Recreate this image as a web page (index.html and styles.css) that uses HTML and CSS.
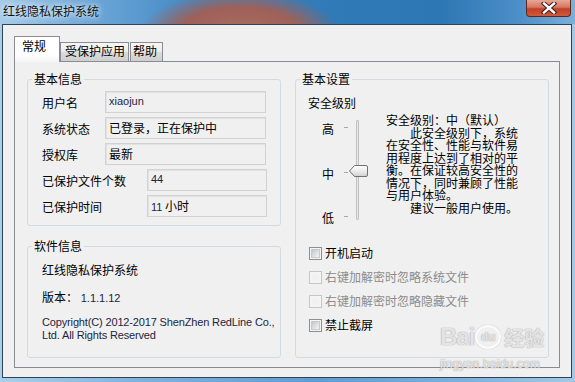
FILE: index.html
```html
<!DOCTYPE html>
<html lang="zh-CN">
<head>
  <meta charset="UTF-8" />
  <title>红线隐私保护系统</title>
  <link rel="stylesheet" href="styles.css">
</head>
<body>
  <div class="window">
    <div class="titlebar">
      <span class="title">红线隐私保护系统</span>
      <span class="close">
        <svg width="16" height="12" viewBox="0 0 16 12">
          <path d="M3 1.5 L13 10.5 M13 1.5 L3 10.5" stroke="#3a1d18" stroke-width="4.4" stroke-linecap="square"/>
          <path d="M3 1.5 L13 10.5 M13 1.5 L3 10.5" stroke="#fff" stroke-width="2.4" stroke-linecap="square"/>
        </svg>
      </span>
    </div>

    <div class="client">
      <div class="tabs">
        <div class="tab active">常规</div>
        <div class="tab">受保护应用</div>
        <div class="tab last">帮助</div>
      </div>

      <div class="panel">
        <div class="col">
          <fieldset class="group info">
            <legend>基本信息</legend>
            <div class="rows">
              <div class="row"><span class="label">用户名</span><span class="field latin">xiaojun</span></div>
              <div class="row"><span class="label">系统状态</span><span class="field">已登录，正在保护中</span></div>
              <div class="row"><span class="label">授权库</span><span class="field">最新</span></div>
              <div class="row wide"><span class="label">已保护文件个数</span><span class="field latin">44</span></div>
              <div class="row wide"><span class="label">已保护时间</span><span class="field"><span class="latin">11</span> 小时</span></div>
            </div>
          </fieldset>

          <fieldset class="group about">
            <legend>软件信息</legend>
            <div class="app-name">红线隐私保护系统</div>
            <div class="version">版本： <span class="latin">1.1.1.12</span></div>
            <div class="copyright latin">Copyright(C) 2012-2017 ShenZhen RedLine Co.,<br>Ltd. All Rights Reserved</div>
          </fieldset>
        </div>

        <fieldset class="group settings">
          <legend>基本设置</legend>
          <div class="level-title">安全级别</div>
          <div class="level">
            <div class="slider">
              <div class="marks">
                <div class="mark">高<i></i></div>
                <div class="mark">中<i></i></div>
                <div class="mark">低<i></i></div>
              </div>
              <div class="track">
                <svg class="thumb" width="19" height="12" viewBox="0 0 19 12">
                  <defs>
                    <linearGradient id="tg" x1="0" y1="0" x2="0" y2="1">
                      <stop offset="0" stop-color="#ffffff"/>
                      <stop offset="0.5" stop-color="#ececec"/>
                      <stop offset="1" stop-color="#cfcfcf"/>
                    </linearGradient>
                  </defs>
                  <path d="M0.5 6 L5.5 0.5 H17 Q18.5 0.5 18.5 2 V10 Q18.5 11.5 17 11.5 H5.5 Z" fill="url(#tg)" stroke="#707070"/>
                </svg>
              </div>
            </div>
            <div class="desc">
              <div>安全级别：中（默认）</div>
              <div>　　此安全级别下，系统</div>
              <div>在安全性、性能与软件易</div>
              <div>用程度上达到了相对的平</div>
              <div>衡。在保证较高安全性的</div>
              <div>情况下，同时兼顾了性能</div>
              <div>与用户体验。</div>
              <div>　　建议一般用户使用。</div>
            </div>
          </div>

          <div class="checks">
            <div class="check"><span class="cb"></span>开机启动</div>
            <div class="check disabled"><span class="cb"></span>右键加解密时忽略系统文件</div>
            <div class="check disabled"><span class="cb"></span>右键加解密时忽略隐藏文件</div>
            <div class="check"><span class="cb"></span>禁止截屏</div>
          </div>
        </fieldset>
      </div>
    </div>

    <div class="watermark">
      <div class="wm-logo">
        <span class="wm-bai">Bai</span>
        <span class="wm-du">du</span>
        <span class="wm-cn">经验</span>
      </div>
      <div class="wm-url">jingyan.baidu.com</div>
    </div>
  </div>
</body>
</html>
```

FILE: styles.css
```css
html, body { margin: 0; padding: 0; }
body {
  font-family: "Liberation Sans", "Noto Sans CJK SC", sans-serif;
  font-size: 12px;
  color: #000;
}
.latin { font-family: "Liberation Sans", sans-serif; font-size: 11px; color: #1c1f3e; }

.window {
  position: relative;
  width: 575px; height: 382px;
  display: flex; flex-direction: column;
  overflow: hidden;
  background: linear-gradient(90deg, #a9cfe9 0, #7fb1dc 25%, #5f9dd2 55%, #7cb0da 80%, #a3c9e6 100%);
}

/* title bar */
.titlebar {
  height: 24px; flex: none;
  display: flex; justify-content: space-between; align-items: flex-start;
  padding: 0 4px 0 3px;
  background:
    radial-gradient(ellipse 100px 44px at 240px 34px, #a86f65 0%, #9f6058 60%, rgba(160,96,88,0) 100%),
    linear-gradient(90deg, #a6cbe8 0, #6ea7d7 90px, #3f88c4 200px, #2f7ab7 330px, #2c77b4 440px, #4d8fc8 520px, #7cb0da 575px);
}
.title {
  font-family: "Noto Sans CJK SC", sans-serif;
  font-size: 12px; line-height: 14px;
  padding-top: 4px;
  color: #111;
  text-shadow: 0 0 5px rgba(255,255,255,.9), 0 0 8px rgba(255,255,255,.7);
}
.close {
  width: 45px; height: 17px;
  box-sizing: border-box;
  display: flex; align-items: center; justify-content: center;
  border: 1px solid #5a2a22; border-top: none;
  border-radius: 0 0 4px 4px;
  background: linear-gradient(#e8a696 0, #d47862 45%, #c33f25 55%, #d05a3c 100%);
}

/* client area */
.client {
  flex: 1;
  margin: 0 3px 4px 2px;
  border: 1px solid #2f4256;
  background: #f0f0f0;
  padding: 11px 0 0 11px;
}

.tabs { display: flex; align-items: flex-end; height: 25px; }
.tab {
  height: 19px; box-sizing: border-box;
  padding: 1px 3px 0 4px;
  border: 1px solid #898c95; border-bottom: none;
  line-height: 14px;
  font-family: "Noto Sans CJK SC", sans-serif;
  background: linear-gradient(#f6f6f6 0, #ececec 48%, #dcdcdc 52%, #cfcfcf 100%);
}
.tab.last { margin-left: 1px; padding: 1px 5px 0 2px; }
.tab.active {
  height: 26px; margin-bottom: -1px;
  position: relative; z-index: 1;
  padding: 2px 13px 0 7px;
  background: linear-gradient(#fff 0, #fff 70%, #f4f4f4 100%);
}

.panel {
  width: 546px; height: 307px; box-sizing: border-box;
  border: 1px solid #898c95;
  display: flex; gap: 14px;
  padding: 11px 10px 9px 12px;
}
.col { width: 254px; display: flex; flex-direction: column; gap: 14px; }

.group {
  margin: 0; min-width: 0;
  border: 1px solid #d3dbe1; border-radius: 3px;
  font-family: "Noto Sans CJK SC", sans-serif;
}
.group legend {
  padding: 0 2px; margin-left: -10px;
  font-size: 12px; line-height: 12px;
}
.settings legend { margin-left: -8px; }

/* basic info */
.info { padding: 6px 0 8px 14px; }
.rows { display: flex; flex-direction: column; gap: 4px; }
.row { display: flex; align-items: center; height: 22px; }
.row .label { width: 63px; line-height: 14px; padding-top: 1px; }
.row.wide .label { width: 105px; }
.field {
  width: 161px; height: 22px; box-sizing: border-box;
  border: 1px solid #d2d2d2;
  box-shadow: inset 1px 1px 0 #e2e2e2;
  padding: 0 3px; line-height: 19px;
}
.row.wide .field { width: 120px; }
.field.latin { line-height: 18px; }

/* software info */
.about { flex: 1; padding: 11px 0 0 14px; }
.app-name { line-height: 14px; }
.version { line-height: 14px; margin-top: 13px; }
.copyright { margin-top: 11px; line-height: 13px; letter-spacing: -0.15px; }

/* settings */
.settings { width: 254px; box-sizing: border-box; padding: 11px 0 0 12px; }
.level-title { line-height: 14px; }
.level { display: flex; margin-top: 4px; height: 110px; }
.slider { width: 78px; display: flex; }
.marks {
  width: 26px; padding: 8px 0 0 14px;
  display: flex; flex-direction: column; justify-content: space-between;
  height: 102px;
}
.mark { display: flex; align-items: center; line-height: 13px; }
.mark i {
  display: block; flex: none;
  width: 4px; height: 1px; margin: -2px 0 0 10px;
  background: #a8a8a8;
}
.track {
  position: relative;
  width: 3px; height: 100px; margin: 6px 0 0 8px;
  border: 1px solid #c2c2c2; border-radius: 1px;
  background: #e6e6e6;
  box-sizing: border-box;
}
.thumb { position: absolute; left: -8px; top: 44px; }
.desc { line-height: 12.5px; white-space: nowrap; }

.checks { margin-top: 22px; display: flex; flex-direction: column; gap: 10px; }
.check { display: flex; align-items: center; line-height: 14px; }
.cb {
  width: 13px; height: 13px; box-sizing: border-box; flex: none;
  margin: 0 3px 0 1px;
  border: 1px solid #8e8f8f;
  background: #f4f4f4;
  padding: 2px;
}
.cb::after {
  content: ""; display: block; width: 7px; height: 7px;
  background: linear-gradient(135deg, #c2c4c7 0, #e2e3e4 60%, #f2f2f2 100%);
  box-shadow: 0 0 0 1px #c8cacd;
}
.check.disabled { color: #8c8c8c; }
.check.disabled .cb { border-color: #c6c6c6; background: #f4f4f4; }
.check.disabled .cb::after { background: #f1f1f1; box-shadow: none; }

/* baidu watermark */
.watermark {
  position: absolute; left: 440px; top: 318px;
  width: 110px; pointer-events: none;
  color: rgba(255,255,255,.75);
  text-shadow: 0 0 1px rgba(120,120,120,.55), 0 0 1px rgba(120,120,120,.55);
}
.wm-logo { display: flex; align-items: center; height: 38px; }
.wm-bai { font: bold 24px "Liberation Sans", sans-serif; letter-spacing: -1px; }
.wm-du {
  font: bold 12px "Liberation Sans", sans-serif;
  width: 22px; height: 20px; border-radius: 50%;
  border: 2px solid rgba(255,255,255,.75);
  box-shadow: 0 0 1px rgba(120,120,120,.6);
  display: flex; align-items: center; justify-content: center;
  margin: 0 3px 0 1px;
}
.wm-cn { font: bold 20px "Noto Sans CJK SC", sans-serif; }
.wm-url { font: 12px "Liberation Sans", sans-serif; margin-top: 1px; letter-spacing: .2px; }
```
